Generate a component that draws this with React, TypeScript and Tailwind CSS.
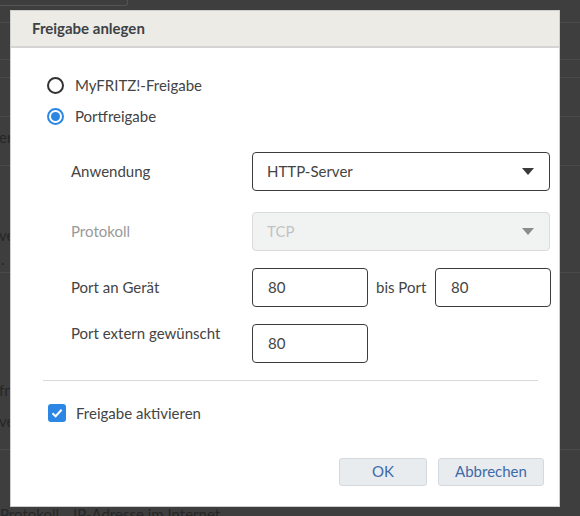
const font = { fontFamily: '"Source Sans Pro", Lato, "Noto Sans", sans-serif' }

function Caret({ muted }: { muted?: boolean }) {
  return (
    <svg width="12" height="7" viewBox="0 0 12 7" className="shrink-0">
      <path d="M0 0 L12 0 L6 7 Z" fill={muted ? '#8c8c8c' : '#3a3a3a'} />
    </svg>
  )
}

function Radio({ checked, label }: { checked?: boolean; label: string }) {
  return (
    <label className="flex items-center gap-[11px] h-[31px]">
      {checked ? (
        <span className="w-[17px] h-[17px] rounded-full border-2 border-[#2b87e3] flex items-center justify-center">
          <span className="w-[9px] h-[9px] rounded-full bg-[#2b87e3]" />
        </span>
      ) : (
        <span className="w-[17px] h-[17px] rounded-full border-2 border-[#333]" />
      )}
      <span className="text-[15px] text-[#444]">{label}</span>
    </label>
  )
}

function TextBox({ value }: { value: string }) {
  return (
    <div className="w-[116px] h-[39px] shrink-0 border border-[#3c3c3c] rounded-[4px] flex items-center px-[15px] text-[15px] text-[#444]">
      {value}
    </div>
  )
}

export default function App() {
  return (
    <div className="relative w-[580px] h-[516px] overflow-hidden bg-[#3e3e3e] text-[#262626]" style={font}>
      {/* page behind the modal */}
      <div className="flex flex-col text-[15px]">
        <div className="h-[23px] border-b border-[#4a4a4a]">
          <div className="w-[128px] h-[6px] border-r border-b border-[#555] rounded-br-[3px]" />
        </div>
        <div className="h-[37px] border-b border-[#4a4a4a]" />
        <div className="h-[18px] border-b border-[#4a4a4a]" />
        <div className="h-[39px] border-b border-[#4a4a4a]" />
        <div className="h-[49px] border-b border-[#4a4a4a] pt-[9px] -ml-[1px]">er</div>
        <div className="h-[107px] border-b border-[#4a4a4a] pt-[57px] -ml-[1px] leading-[24px]">
          <div>ve</div>
          <div className="ml-[2px]">.</div>
        </div>
        <div className="h-[177px] border-b border-[#4a4a4a] pt-[102px] -ml-[1px] leading-[31px]">
          <div>fn</div>
          <div>ve</div>
        </div>
        <div className="h-[66px] pt-[55px] leading-[18px] whitespace-nowrap">
          <span>Protokoll</span>
          <span className="ml-[14px]">IP-Adresse im Internet</span>
        </div>
      </div>

      {/* modal dialog */}
      <div className="absolute left-[10px] top-[10px] w-[550px] h-[497px] bg-white border border-[#cfcfcf] flex flex-col">
        <div className="h-[37px] shrink-0 bg-[#ecebe5] border-b-2 border-[#d4d4d4] flex items-center px-[21px]">
          <span className="text-[15px] font-bold text-[#3e4247]">Freigabe anlegen</span>
        </div>

        <div className="flex flex-col pl-[36px] pt-[22px]">
          <Radio label="MyFRITZ!-Freigabe" />
          <Radio checked label="Portfreigabe" />
        </div>

        <div className="flex flex-col pl-[60px] pt-[20px] gap-[21px] text-[15px] text-[#444]">
          <div className="flex items-center">
            <span className="w-[181px] shrink-0">Anwendung</span>
            <div className="w-[298px] h-[39px] border border-[#3c3c3c] rounded-[4px] flex items-center justify-between pl-[14px] pr-[15px]">
              <span>HTTP-Server</span>
              <Caret />
            </div>
          </div>
          <div className="flex items-center">
            <span className="w-[181px] shrink-0 text-[#999]">Protokoll</span>
            <div className="w-[298px] h-[39px] border border-[#dadada] bg-[#f1f2f2] rounded-[4px] flex items-center justify-between pl-[14px] pr-[15px]">
              <span className="text-[#c2c2c2]">TCP</span>
              <Caret muted />
            </div>
          </div>
          <div className="flex items-center -mt-[4px]">
            <span className="w-[181px] shrink-0">Port an Gerät</span>
            <TextBox value="80" />
            <span className="ml-[8px] w-[59px] shrink-0">bis Port</span>
            <TextBox value="80" />
          </div>
          <div className="flex items-start -mt-[4px]">
            <span className="w-[181px] shrink-0 -mt-[2px]">Port extern gewünscht</span>
            <TextBox value="80" />
          </div>
        </div>

        <div className="mx-[32px] mt-[17px] border-t border-[#d9d9d9] w-[495px]" />

        <label className="flex items-center gap-[10px] pl-[37px] mt-[21px]">
          <span className="w-[18px] h-[18px] rounded-[3px] bg-[#2b87e3] flex items-center justify-center">
            <svg width="12" height="10" viewBox="0 0 12 10">
              <path d="M1.5 5.2 L4.6 8.2 L10.6 1.8" fill="none" stroke="#fff" strokeWidth="2" />
            </svg>
          </span>
          <span className="text-[15px] text-[#444]">Freigabe aktivieren</span>
        </label>

        <div className="flex justify-end gap-[11px] pr-[15px] mt-[33px]">
          <button className="w-[88px] h-[28px] bg-[#e8ecef] border border-[#d3d9de] rounded-[3px] text-[15px] text-[#3d6aa8]">
            OK
          </button>
          <button className="w-[106px] h-[28px] bg-[#e8ecef] border border-[#d3d9de] rounded-[3px] text-[15px] text-[#3d6aa8]">
            Abbrechen
          </button>
        </div>
      </div>
    </div>
  )
}
